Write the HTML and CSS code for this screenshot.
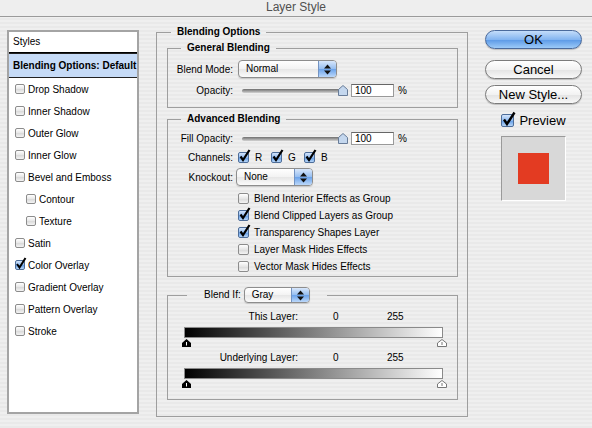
FILE: index.html
```html
<!DOCTYPE html>
<html lang="en">
<head>
    <meta charset="UTF-8">
    <title>Layer Style</title>
    <link rel="stylesheet" href="styles.css">
</head>
<body>
    <div class="titlebar">Layer Style</div>
    <div class="dialog">
        <div class="styles-panel">
            <div class="styles-head">Styles</div>
            <ul class="styles-list">
                <li class="selected">Blending Options: Default</li>
                <li><span class="cb"></span>Drop Shadow</li>
                <li><span class="cb"></span>Inner Shadow</li>
                <li><span class="cb"></span>Outer Glow</li>
                <li><span class="cb"></span>Inner Glow</li>
                <li><span class="cb"></span>Bevel and Emboss</li>
                <li class="sub"><span class="cb"></span>Contour</li>
                <li class="sub"><span class="cb"></span>Texture</li>
                <li><span class="cb"></span>Satin</li>
                <li><span class="cb on"><svg width="12" height="13" viewBox="0 0 12 13"><path d="M2 7 L4.5 10.5 L10.5 1" fill="none" stroke="#000" stroke-width="2"/></svg></span>Color Overlay</li>
                <li><span class="cb"></span>Gradient Overlay</li>
                <li><span class="cb"></span>Pattern Overlay</li>
                <li><span class="cb"></span>Stroke</li>
            </ul>
        </div>

        <div class="main">
            <fieldset class="group outer">
                <legend>Blending Options</legend>

                <fieldset class="group">
                    <legend>General Blending</legend>
                    <div class="rows general">
                        <div class="row">
                            <span class="lbl">Blend Mode:</span>
                            <div class="popup mode">
                                <span class="popup-text">Normal</span>
                                <span class="popup-arrows"><svg width="7" height="11" viewBox="0 0 7 11"><path d="M0 4.5 L3.5 0.5 L7 4.5 Z M0 6.5 L3.5 10.5 L7 6.5 Z" fill="#111"/></svg></span>
                            </div>
                        </div>
                        <div class="row">
                            <span class="lbl">Opacity:</span>
                            <div class="slider">
                                <div class="track"></div>
                                <svg class="knob" width="10" height="11" viewBox="0 0 10 11"><path d="M5 0.5 L9.5 4.5 V10.5 H0.5 V4.5 Z" fill="#c4d7ee" stroke="#687c98"/></svg>
                            </div>
                            <span class="field">100</span><span class="unit">%</span>
                        </div>
                    </div>
                </fieldset>

                <fieldset class="group advanced">
                    <legend>Advanced Blending</legend>
                    <div class="rows adv">
                        <div class="row">
                            <span class="lbl">Fill Opacity:</span>
                            <div class="slider">
                                <div class="track"></div>
                                <svg class="knob" width="10" height="11" viewBox="0 0 10 11"><path d="M5 0.5 L9.5 4.5 V10.5 H0.5 V4.5 Z" fill="#c4d7ee" stroke="#687c98"/></svg>
                            </div>
                            <span class="field">100</span><span class="unit">%</span>
                        </div>
                        <div class="row channels">
                            <span class="lbl">Channels:</span>
                            <span class="cb md on"><svg width="13" height="14" viewBox="0 0 13 14"><path d="M2.5 7.5 L5 11 L11.5 1" fill="none" stroke="#000" stroke-width="2.2"/></svg></span><span class="ch">R</span>
                            <span class="cb md on"><svg width="13" height="14" viewBox="0 0 13 14"><path d="M2.5 7.5 L5 11 L11.5 1" fill="none" stroke="#000" stroke-width="2.2"/></svg></span><span class="ch">G</span>
                            <span class="cb md on"><svg width="13" height="14" viewBox="0 0 13 14"><path d="M2.5 7.5 L5 11 L11.5 1" fill="none" stroke="#000" stroke-width="2.2"/></svg></span><span class="ch">B</span>
                        </div>
                        <div class="row knockout">
                            <span class="lbl">Knockout:</span>
                            <div class="popup knock">
                                <span class="popup-text">None</span>
                                <span class="popup-arrows"><svg width="7" height="11" viewBox="0 0 7 11"><path d="M0 4.5 L3.5 0.5 L7 4.5 Z M0 6.5 L3.5 10.5 L7 6.5 Z" fill="#111"/></svg></span>
                            </div>
                        </div>
                        <div class="row check first"><span class="cb md"></span><span class="check-text">Blend Interior Effects as Group</span></div>
                        <div class="row check"><span class="cb md on"><svg width="13" height="14" viewBox="0 0 13 14"><path d="M2.5 7.5 L5 11 L11.5 1" fill="none" stroke="#000" stroke-width="2.2"/></svg></span><span class="check-text">Blend Clipped Layers as Group</span></div>
                        <div class="row check"><span class="cb md on"><svg width="13" height="14" viewBox="0 0 13 14"><path d="M2.5 7.5 L5 11 L11.5 1" fill="none" stroke="#000" stroke-width="2.2"/></svg></span><span class="check-text">Transparency Shapes Layer</span></div>
                        <div class="row check"><span class="cb md"></span><span class="check-text">Layer Mask Hides Effects</span></div>
                        <div class="row check"><span class="cb md"></span><span class="check-text">Vector Mask Hides Effects</span></div>
                    </div>
                </fieldset>

                <fieldset class="group blend-if">
                    <legend class="blendif-legend">
                        <span>Blend If:</span>
                        <div class="popup gray">
                            <span class="popup-text">Gray</span>
                            <span class="popup-arrows"><svg width="7" height="11" viewBox="0 0 7 11"><path d="M0 4.5 L3.5 0.5 L7 4.5 Z M0 6.5 L3.5 10.5 L7 6.5 Z" fill="#111"/></svg></span>
                        </div>
                    </legend>
                    <div class="blendif">
                        <div class="bl-row"><span class="bl-name">This Layer:</span><span class="bl-lo">0</span><span>255</span></div>
                        <div class="ramp"></div>
                        <div class="ramp-knobs">
                            <svg width="9" height="8" viewBox="0 0 9 8"><path d="M4.5 0 L9 4 V8 H0 V4 Z" fill="#000"/><path d="M4.5 3 V6.5" stroke="#fff"/></svg>
                            <svg width="10" height="8" viewBox="0 0 10 8"><path d="M5 0.5 L9.5 4 V7.5 H0.5 V4 Z" fill="#fff" stroke="#777"/><path d="M5 3 V6" stroke="#777"/></svg>
                        </div>
                        <div class="bl-row"><span class="bl-name">Underlying Layer:</span><span class="bl-lo">0</span><span>255</span></div>
                        <div class="ramp"></div>
                        <div class="ramp-knobs">
                            <svg width="9" height="8" viewBox="0 0 9 8"><path d="M4.5 0 L9 4 V8 H0 V4 Z" fill="#000"/><path d="M4.5 3 V6.5" stroke="#fff"/></svg>
                            <svg width="10" height="8" viewBox="0 0 10 8"><path d="M5 0.5 L9.5 4 V7.5 H0.5 V4 Z" fill="#fff" stroke="#777"/><path d="M5 3 V6" stroke="#777"/></svg>
                        </div>
                    </div>
                </fieldset>
            </fieldset>
        </div>

        <div class="side">
            <div class="btn default">OK</div>
            <div class="btn cancel">Cancel</div>
            <div class="btn new">New Style...</div>
            <div class="preview-check">
                <span class="cb lg on"><svg width="15" height="16" viewBox="0 0 15 16"><path d="M3 8.5 L6 13 L13.5 1.5" fill="none" stroke="#000" stroke-width="2.4"/></svg></span>Preview
            </div>
            <div class="preview-box"><div class="swatch"></div></div>
        </div>
    </div>
</body>
</html>
```

FILE: styles.css
```css
body {
    margin: 0;
    width: 592px;
    height: 428px;
    overflow: hidden;
    font-family: "Liberation Sans", Arial, sans-serif;
    font-size: 10px;
    color: #000;
    background: repeating-linear-gradient(#efefef 0, #efefef 2px, #e9e9e9 2px, #e9e9e9 4px);
}
.titlebar {
    height: 16px;
    line-height: 14px;
    border-bottom: 1px solid #9a9a9a;
    text-align: center;
    font-size: 12px;
    color: #505050;
    background: #eeeeee;
}
.dialog {
    display: flex;
    align-items: flex-start;
    padding: 9px 0 0 7px;
}

/* checkboxes */
.cb {
    display: inline-block;
    position: relative;
    flex: none;
    width: 10px;
    height: 10px;
    box-sizing: border-box;
    border: 1px solid #8c8c8c;
    border-radius: 2px;
    background: linear-gradient(#ffffff, #e6e6e6 50%, #d8d8d8 51%, #f4f4f4);
}
.cb.md {
    width: 11px;
    height: 11px;
}
.cb.lg {
    width: 13px;
    height: 13px;
}
.cb.on {
    border-color: #4d6d99;
    background: linear-gradient(#d4e5fb, #8fbaf0 50%, #5f9be6 51%, #b6d5f8);
}
.cb svg {
    position: absolute;
    left: -1px;
    top: -4px;
}

/* left styles list */
.styles-panel {
    width: 132px;
    height: 384px;
    margin-top: 4px;
    box-sizing: border-box;
    border: 2px solid #a4a4a4;
    background: #fff;
}
.styles-head {
    height: 20px;
    line-height: 20px;
    padding-left: 4px;
    border-bottom: 1px solid #000;
}
.styles-list {
    list-style: none;
    margin: 0;
    padding: 0;
}
.styles-list li {
    height: 22px;
    display: flex;
    align-items: center;
    padding-left: 6px;
}
.styles-list li.selected {
    height: 23px;
    padding-left: 4px;
    font-weight: bold;
    background: #c6dbf7;
    border-top: 1px solid #222;
    border-bottom: 1px solid #222;
}
.styles-list li.sub {
    padding-left: 17px;
}
.styles-list .cb {
    margin-right: 3px;
}

/* group boxes */
.main {
    width: 312px;
    margin-left: 17px;
}
.group {
    margin: 0;
    padding: 0;
    min-width: 0;
    border: 1px solid #9e9e9e;
}
.group legend {
    padding: 0 6px;
    margin-left: 13px;
    font-weight: bold;
    line-height: 12px;
}
.group.outer {
    padding: 4px 9px 16px 10px;
}
.group.outer > legend {
    margin-left: 4px;
}
.group.advanced {
    margin-top: 5px;
}
.group.blend-if {
    margin-top: 10px;
}

.row {
    display: flex;
    align-items: center;
}
.lbl {
    width: 65px;
    margin-right: 5px;
    text-align: right;
    flex: none;
}
.general {
    padding: 6px 0 10px;
}
.general .row + .row {
    margin-top: 6px;
}
.adv {
    padding: 7px 0 1px;
}
.adv .channels {
    margin-top: 7px;
    height: 11px;
}
.adv .knockout {
    margin-top: 5px;
}
.adv .check {
    height: 17px;
    padding-left: 70px;
}
.adv .check.first {
    margin-top: 4px;
}
.check-text {
    margin-left: 5px;
}
.ch {
    margin: 0 8px 0 6px;
    width: 8px;
}

/* popup menus */
.popup {
    display: flex;
    height: 18px;
    box-sizing: border-box;
    border: 1px solid #8d8d8d;
    border-radius: 4px;
    background: linear-gradient(#ffffff, #f3f3f3 50%, #e6e6e6 51%, #fbfbfb);
    box-shadow: 0 1px 1px rgba(0, 0, 0, 0.15);
}
.popup-text {
    flex: 1;
    padding-left: 7px;
    line-height: 16px;
}
.popup-arrows {
    width: 17px;
    display: flex;
    align-items: center;
    justify-content: center;
    border-left: 1px solid #7393c2;
    border-radius: 0 3px 3px 0;
    background: linear-gradient(#d8e7fb, #94bdf0 50%, #6aa2ea 51%, #bcd8fa);
}
.popup.mode {
    width: 99px;
}
.popup.knock {
    width: 77px;
    margin-left: -2px;
}
.popup.gray {
    width: 66px;
    height: 16px;
    margin-left: 3px;
}
.popup.gray .popup-text {
    line-height: 14px;
}

/* sliders and fields */
.slider {
    display: flex;
    align-items: center;
    margin-left: 4px;
}
.track {
    width: 101px;
    height: 4px;
    border-radius: 2px;
    background: linear-gradient(#6f6f6f, #a8a8a8 60%, #d4d4d4);
}
.knob {
    margin-left: -5px;
}
.field {
    width: 43px;
    height: 13px;
    box-sizing: border-box;
    margin-left: 3px;
    padding-left: 3px;
    line-height: 12px;
    border: 1px solid #999;
    border-top-color: #666;
    background: #fff;
}
.unit {
    margin-left: 4px;
}

/* blend if */
.blendif-legend {
    display: flex;
    align-items: center;
    font-weight: normal !important;
    line-height: 16px !important;
    margin-left: 19px !important;
    padding: 0 17px 0 17px !important;
}
.blendif {
    padding: 8px 0 11px;
}
.bl-row {
    display: flex;
    height: 12px;
    line-height: 12px;
}
.bl-name {
    width: 130px;
    text-align: right;
}
.bl-lo {
    margin-left: 35px;
    width: 54px;
}
.ramp {
    height: 11px;
    margin: 4px 14px 0 16px;
    box-sizing: border-box;
    border: 1px solid #8a8a8a;
    background: linear-gradient(to right, #000, #fff);
}
.ramp-knobs {
    display: flex;
    justify-content: space-between;
    height: 8px;
    margin: 1px 10px 0 14px;
}
.ramp-knobs + .bl-row {
    margin-top: 5px;
}

/* right side */
.side {
    width: 97px;
    margin: 4px 0 0 17px;
    display: flex;
    flex-direction: column;
    align-items: center;
}
.btn {
    width: 97px;
    height: 19px;
    box-sizing: border-box;
    border: 1px solid #7b7b7b;
    border-radius: 10px;
    font-size: 13px;
    line-height: 17px;
    text-align: center;
    background: linear-gradient(#ffffff, #f2f2f2 50%, #e3e3e3 51%, #f8f8f8);
    box-shadow: 0 1px 1px rgba(0, 0, 0, 0.2);
}
.btn.default {
    border-color: #4a6a9c;
    background: linear-gradient(#c4ddfa, #84b5f0 50%, #5a98e6 51%, #9ccaf8);
}
.btn.cancel {
    margin-top: 11px;
}
.btn.new {
    margin-top: 6px;
}
.preview-check {
    display: flex;
    align-items: center;
    height: 14px;
    margin-top: 9px;
    font-size: 13px;
}
.preview-check .cb {
    margin-right: 5px;
}
.preview-box {
    width: 65px;
    height: 65px;
    margin-top: 9px;
    box-sizing: border-box;
    border: 1px solid #fff;
    border-top-color: #9a9a9a;
    border-left-color: #9a9a9a;
    background: #d8d8d8;
    display: flex;
    align-items: center;
    justify-content: center;
}
.swatch {
    width: 31px;
    height: 31px;
    background: #e33b22;
}
```
